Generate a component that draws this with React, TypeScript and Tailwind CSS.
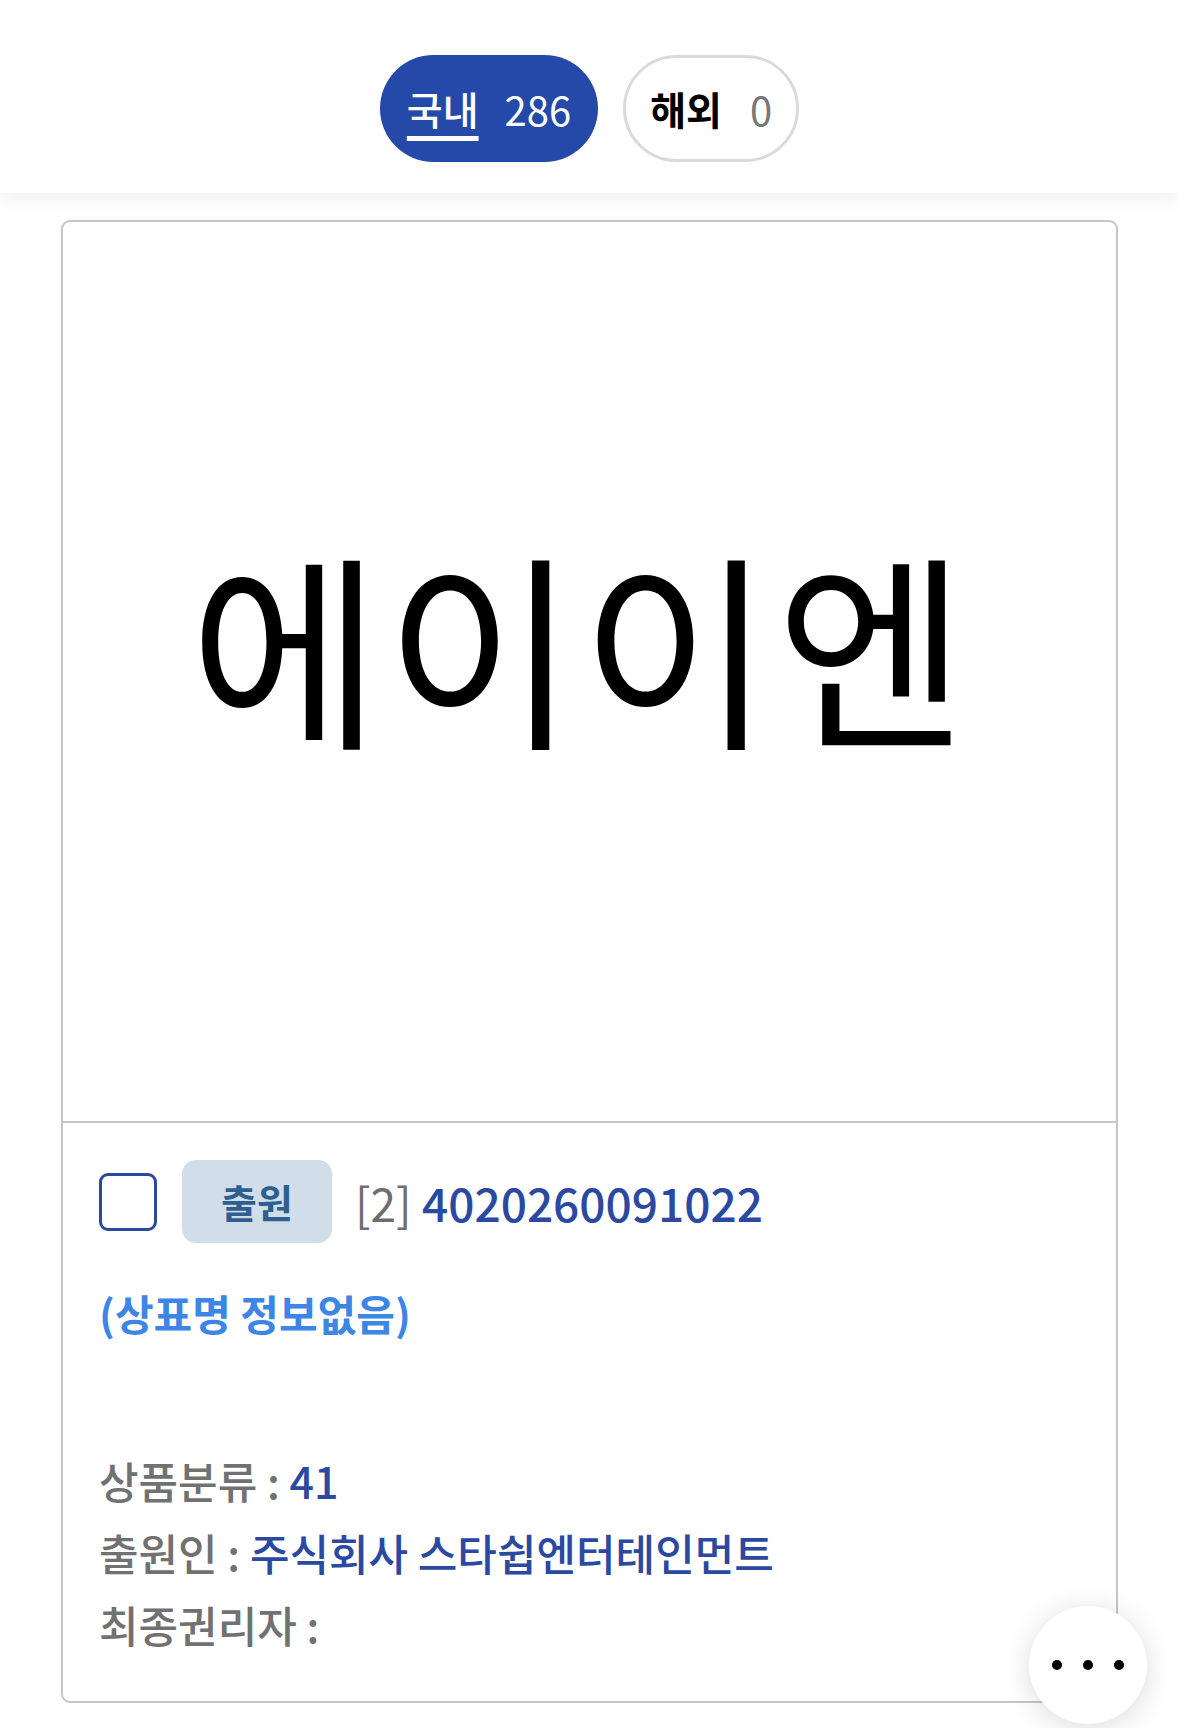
import React from "react";

const font = {
  fontFamily: '"Noto Sans CJK KR", "Noto Sans", sans-serif',
};

function TabPill({
  label,
  count,
  active,
}: {
  label: string;
  count: number;
  active?: boolean;
}) {
  if (active) {
    return (
      <button
        type="button"
        className="flex h-[107px] items-center gap-[26px] rounded-full bg-[#2449a9] px-[27px] text-white"
      >
        <span className="text-[39px] font-medium leading-none underline decoration-[5px] underline-offset-[11px]">
          {label}
        </span>
        <span className="text-[40px] font-normal leading-none">{count}</span>
      </button>
    );
  }
  return (
    <button
      type="button"
      className="flex h-[107px] items-center gap-[28px] rounded-full border-[3px] border-[#dadada] bg-white px-[24px]"
    >
      <span className="text-[39px] font-bold leading-none text-black">{label}</span>
      <span className="text-[40px] font-normal leading-none text-[#777777]">{count}</span>
    </button>
  );
}

function InfoLine({ label, value }: { label: string; value?: string }) {
  return (
    <p className="text-[43px] font-medium leading-[72px] text-[#717171]">
      {label} :{" "}
      {value && <span className="text-[#2b49a0]">{value}</span>}
    </p>
  );
}

export default function App() {
  return (
    <div className="relative min-h-[1728px] overflow-hidden bg-white" style={font}>
      <header className="relative z-10 flex h-[193px] items-center justify-center gap-[25px] bg-white pt-[24px] shadow-[0_6px_18px_rgba(0,0,0,0.06)]">
        <TabPill label="국내" count={286} active />
        <TabPill label="해외" count={0} />
      </header>

      <main className="px-[61px] pt-[27px]">
        <div className="overflow-hidden rounded-[9px] border-2 border-[#c6c6c6] bg-white">
          <div className="flex h-[901px] items-center justify-center border-b-2 border-[#c6c6c6] pb-[58px] pr-[18px]">
            <span className="text-[208px] font-normal leading-none tracking-[0.02em] text-black">
              에이이엔
            </span>
          </div>

          <div className="px-[36px] pb-[41px] pt-[37px]">
            <div className="flex items-center">
              <span className="h-[58px] w-[58px] shrink-0 rounded-[9px] border-[3px] border-[#2b4a9b]" />
              <span className="ml-[25px] flex h-[83px] w-[150px] items-center justify-center rounded-[14px] bg-[#d1dee9] text-[39px] font-bold text-[#2f5f8f]">
                출원
              </span>
              <span className="ml-[23px] text-[46px] font-medium leading-none">
                <span className="font-normal text-[#6e6e6e]">[2]</span>{" "}
                <span className="text-[#2b49a0]">4020260091022</span>
              </span>
            </div>

            <p className="mt-[44px] text-[42px] font-bold leading-[52px] text-[#3d86e6]">
              (상표명 정보없음)
            </p>

            <div className="mt-[105px]">
              <InfoLine label="상품분류" value="41" />
              <InfoLine label="출원인" value="주식회사 스타쉽엔터테인먼트" />
              <InfoLine label="최종권리자" />
            </div>
          </div>
        </div>
      </main>

      <button
        type="button"
        className="absolute right-[32px] top-[1606px] flex h-[118px] w-[118px] items-center justify-center gap-[21px] rounded-full bg-white shadow-[0_4px_28px_rgba(0,0,0,0.14)]"
      >
        <span className="h-[10px] w-[10px] rounded-full bg-black" />
        <span className="h-[10px] w-[10px] rounded-full bg-black" />
        <span className="h-[10px] w-[10px] rounded-full bg-black" />
      </button>
    </div>
  );
}
